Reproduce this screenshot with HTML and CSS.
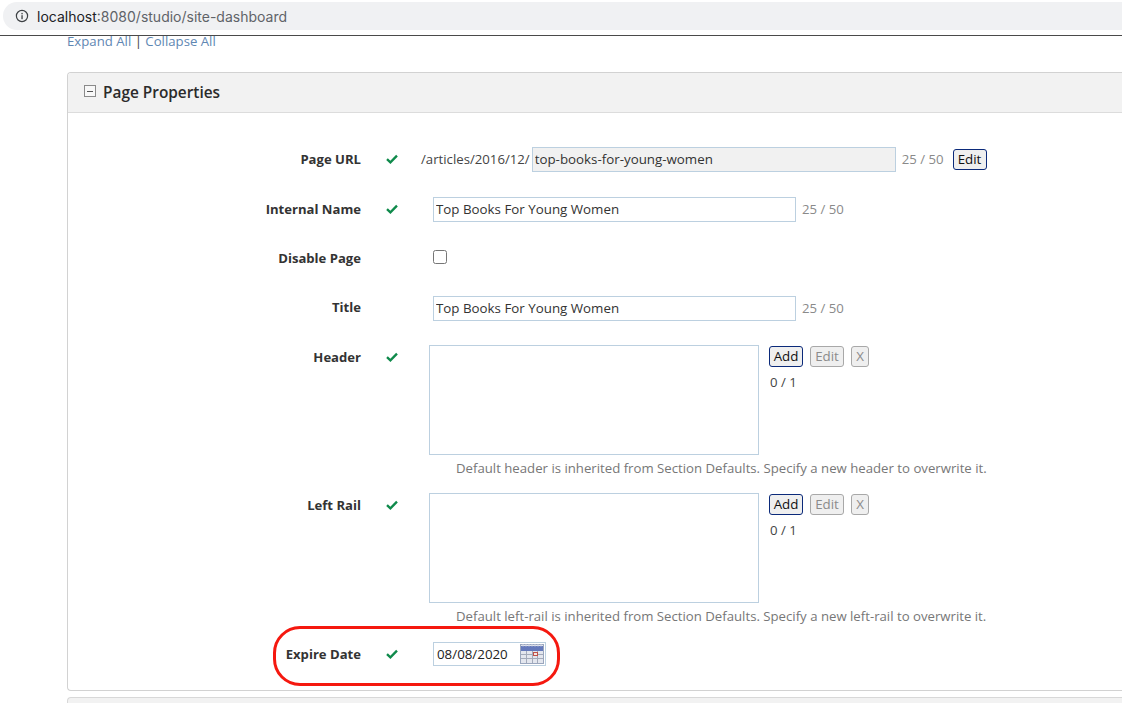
FILE: index.html
```html
<!DOCTYPE html>
<html lang="en">
<head>
<meta charset="utf-8">
<title>Site Dashboard</title>
<link rel="stylesheet" href="styles.css">
</head>
<body>
<header class="browser">
  <div class="address">
    <svg class="info" width="14" height="14" viewBox="0 0 14 14"><circle cx="7" cy="7" r="5.6" fill="none" stroke="#3c4043" stroke-width="1.2"/><rect x="6.4" y="6.2" width="1.3" height="4" fill="#3c4043"/><rect x="6.4" y="3.9" width="1.3" height="1.4" fill="#3c4043"/></svg>
    <span class="host">localhost</span><span class="path">:8080/studio/site-dashboard</span>
  </div>
</header>
<main class="page">
  <div class="links"><a>Expand All</a> <span class="sep">|</span> <a>Collapse All</a></div>
  <section class="panel">
    <div class="panel-head">
      <span class="toggle"><span class="dash"></span></span>
      <h2>Page Properties</h2>
    </div>
    <div class="panel-body">
      <div class="row row-url">
        <label>Page URL</label><svg class="check" viewBox="0 0 12 10"><path d="M1 5.2 4.4 8.4 11 1.6" fill="none" stroke="#0f8a4b" stroke-width="2.3"/></svg>
        <div class="control url"><span class="prefix">/articles/2016/12/</span><input class="text slug" value="top-books-for-young-women" readonly><span class="count">25 / 50</span><button class="btn focus">Edit</button></div>
      </div>
      <div class="row row-name">
        <label>Internal Name</label><svg class="check" viewBox="0 0 12 10"><path d="M1 5.2 4.4 8.4 11 1.6" fill="none" stroke="#0f8a4b" stroke-width="2.3"/></svg>
        <div class="control"><input class="text wide" value="Top Books For Young Women"><span class="count">25 / 50</span></div>
      </div>
      <div class="row row-disable">
        <label>Disable Page</label><span class="nocheck"></span>
        <div class="control"><span class="box"></span></div>
      </div>
      <div class="row row-title">
        <label>Title</label><span class="nocheck"></span>
        <div class="control"><input class="text wide" value="Top Books For Young Women"><span class="count">25 / 50</span></div>
      </div>
      <div class="row row-area">
        <label>Header</label><svg class="check" viewBox="0 0 12 10"><path d="M1 5.2 4.4 8.4 11 1.6" fill="none" stroke="#0f8a4b" stroke-width="2.3"/></svg>
        <div class="control area-wrap">
          <div class="area"></div>
          <div class="side">
            <div class="btns"><button class="btn focus">Add</button><button class="btn off">Edit</button><button class="btn off">X</button></div>
            <div class="tally">0 / 1</div>
          </div>
        </div>
      </div>
      <p class="hint">Default header is inherited from Section Defaults. Specify a new header to overwrite it.</p>
      <div class="row row-area row-rail">
        <label>Left Rail</label><svg class="check" viewBox="0 0 12 10"><path d="M1 5.2 4.4 8.4 11 1.6" fill="none" stroke="#0f8a4b" stroke-width="2.3"/></svg>
        <div class="control area-wrap">
          <div class="area"></div>
          <div class="side">
            <div class="btns"><button class="btn focus">Add</button><button class="btn off">Edit</button><button class="btn off">X</button></div>
            <div class="tally">0 / 1</div>
          </div>
        </div>
      </div>
      <p class="hint">Default left-rail is inherited from Section Defaults. Specify a new left-rail to overwrite it.</p>
      <div class="row row-date">
        <label>Expire Date</label><svg class="check" viewBox="0 0 12 10"><path d="M1 5.2 4.4 8.4 11 1.6" fill="none" stroke="#0f8a4b" stroke-width="2.3"/></svg>
        <div class="control date">
          <span class="date-val">08/08/2020</span>
          <svg class="cal" width="24" height="20" viewBox="0 0 24 20">
            <rect x="0.5" y="0.5" width="23" height="19" fill="#e3e6ee" stroke="#9aa6bd"/>
            <rect x="1" y="2" width="22" height="5" fill="#6479bb"/>
            <path d="M3 0v2.5M6 0v2.5M9 0v2.5M12 0v2.5M15 0v2.5M18 0v2.5M21 0v2.5" stroke="#c9cfdf" stroke-width="1"/>
            <path d="M1 10.5h22M1 14.5h22M6.5 7v12M12.500 7v12M17.500 7v12" stroke="#a3aaba" stroke-width="1"/>
            <rect x="13.500" y="8.500" width="4" height="3" fill="#f4e7e2" stroke="#c0524a"/>
          </svg>
        </div>
      </div>
      <div class="oval"></div>
    </div>
  </section>
  <div class="panel-next"></div>
</main>
</body>
</html>
```
FILE: styles.css
```css
* { box-sizing: border-box; }
html, body { margin: 0; height: 100%; overflow: hidden; background: #fff; }
body { font-family: "Open Sans", "Noto Sans", sans-serif; font-size: 13.2px; color: #333; }

.browser { height: 36px; padding: 2px 0 0 3px; border-bottom: 1px solid #4a4a4a; }
.address { height: 28px; background: #f0f1f3; border-radius: 14px 0 0 14px; display: flex; align-items: center; padding-left: 12px; font-family: Inter, Roboto, sans-serif; font-size: 14px; }
.info { margin-right: 8px; flex: none; }
.host { color: #202124; }
.path { color: #5f6368; }

.page { padding-left: 67px; }
.links { height: 37px; line-height: 12px; margin-top: -1px; color: #5f87b3; white-space: pre-wrap; }
.sep { color: #444; }

.panel { position: relative; height: 619px; border: 1px solid #d2d2d2; border-right: 0; border-radius: 4px 0 0 4px; }
.panel-head { height: 40px; background: #f2f2f2; border-bottom: 1px solid #dcdcdc; border-radius: 3px 0 0 0; display: flex; align-items: center; padding-left: 16px; }
.toggle { width: 12px; height: 12px; border: 1px solid #8a8a8a; background: #f8f8f8; display: flex; align-items: center; justify-content: center; margin-right: 7px; margin-top: -3px; }
.dash { width: 6px; height: 1px; background: #555; }
h2 { margin: 0; font-size: 15.4px; font-weight: 600; color: #2b2b2b; }

.panel-body { position: relative; padding-top: 33px; }
.row { display: flex; align-items: center; }
.row label { width: 293px; margin-right: 1px; text-align: right; font-weight: 700; font-size: 13.1px; color: #333; flex: none; }
.check { width: 12px; height: 10px; margin-left: 24px; margin-right: 23px; flex: none; }
.nocheck { width: 59px; flex: none; }
.control { display: flex; align-items: center; flex: none; padding-left: 12px; }
.row-url { height: 26px; }
.row-url .control { padding-left: 0; }
.row-name { height: 26px; margin-top: 24px; }
.row-disable { height: 26px; margin-top: 23px; }
.row-title { height: 26px; margin-top: 24px; }
.row-title label { margin-top: -2px; }
.row-area { align-items: flex-start; margin-top: 24px; }
.row-area label { margin-top: 3px; }
.row-area .check { margin-top: 7px; }
.row-area .control { padding-left: 8px; }
.row-rail { margin-top: 15px; }

.prefix { margin-right: 2px; color: #444; white-space: nowrap; }
.text { height: 25px; border: 1px solid #bcd0e0; padding: 0 2px; font: 13.33px "Open Sans", sans-serif; color: #333; background: #fff; outline: none; }
.slug { width: 364px; background: #f1f1f1; }
.wide { width: 363px; }
.count { margin-left: 6px; color: #8a8a8a; white-space: nowrap; }
.url .btn { margin-left: 9px; width: 35px; }

.box { width: 14px; height: 14px; border: 1px solid #767676; border-radius: 2.5px; background: #fff; margin-top: -3px; }

.btn { height: 21px; padding: 0; border: 1px solid #767676; border-radius: 3px; background: #efefef; font: 13.33px "Open Sans", sans-serif; color: #111; line-height: 17px; }
.btn.focus { border-color: #0b2a7a; width: 34px; }
.btn.off { border-color: #a8a8a8; color: #8b8b8b; width: 34px; }
.btn.off:last-child { width: 18px; }

.area-wrap { align-items: flex-start; }
.area { width: 330px; height: 110px; border: 1px solid #bcd0e0; background: #fff; }
.side { margin-left: 10px; padding-top: 1px; }
.btns { display: flex; gap: 7px; }
.tally { margin-top: 6px; margin-left: 1px; color: #444; }

.hint { margin: 3px 0 0 388px; height: 20px; line-height: 20px; color: #777; white-space: nowrap; }

.row-date { height: 26px; margin-top: 15px; }
.date { margin-left: 12px; padding: 0 1px 0 3px; width: 113px; height: 24px; border: 1px solid #bcd0e0; justify-content: space-between; color: #222; font-size: 13.33px; }
.cal { flex: none; }

.oval { position: absolute; left: 205px; top: 513px; width: 287px; height: 60px; border: 3px solid #f5180f; border-radius: 27px; }

.panel-next { height: 20px; margin-top: 6px; background: #f2f2f2; border: 1px solid #d8d8d8; border-right: 0; border-radius: 4px 0 0 0; }
```
